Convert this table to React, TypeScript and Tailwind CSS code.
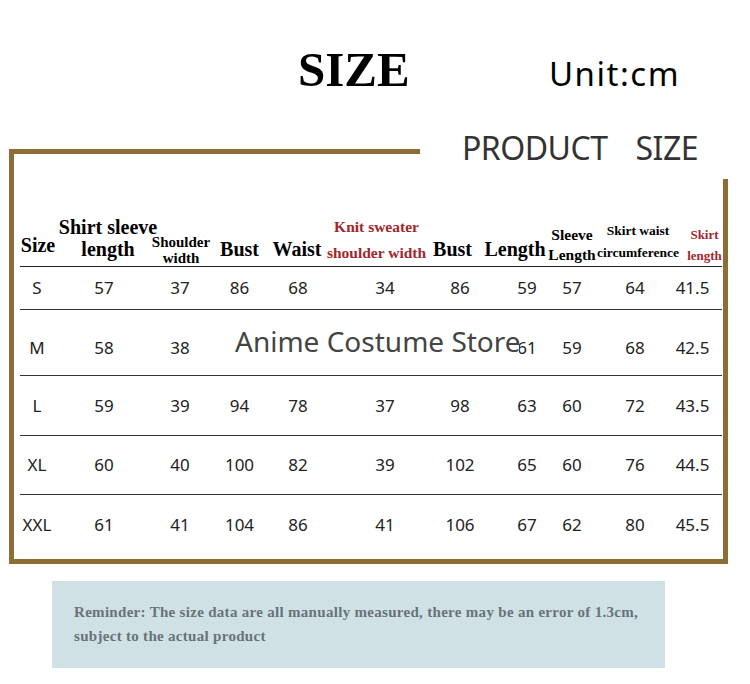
const cols = [
  { w: "w-[50px]", num: "pr-[16px]", head: "pr-[14px] pb-[11px]", lines: ["Size"], cls: "text-[20px] leading-[20px] text-black" },
  { w: "w-[72px]", num: "pr-[4px]", head: "pl-[4px] pb-[6px]", lines: ["Shirt sleeve", "length"], cls: "text-[20px] leading-[22px] text-black" },
  { w: "w-[68px]", num: "pl-[8px]", head: "pl-[10px] pb-0", lines: ["Shoulder", "width"], cls: "text-[15px] leading-[16px] text-black" },
  { w: "w-[59px]", num: "", head: "pb-[7px]", lines: ["Bust"], cls: "text-[20px] leading-[20px] text-black" },
  { w: "w-[72px]", num: "pr-[14px]", head: "pr-[16px] pb-[7px]", lines: ["Waist"], cls: "text-[20px] leading-[20px] text-black" },
  { w: "w-[81px]", num: "pl-[7px]", head: "pr-[10px] pb-0", lines: ["Knit sweater", "shoulder width"], cls: "text-[15.5px] leading-[26px] text-[#a3262b]" },
  { w: "w-[71px]", num: "pl-[5px]", head: "pr-[10px] pb-[7px]", lines: ["Bust"], cls: "text-[20px] leading-[20px] text-black" },
  { w: "w-[56px]", num: "pl-[12px]", head: "pr-[12px] pb-[7px]", lines: ["Length"], cls: "text-[20px] leading-[20px] text-black" },
  { w: "w-[54px]", num: "pr-[8px]", head: "pr-[8px] pb-[1px]", lines: ["Sleeve", "Length"], cls: "text-[15.5px] leading-[20px] text-black" },
  { w: "w-[60px]", num: "pl-[4px]", head: "pl-[10px] pb-[2px]", lines: ["Skirt waist", "circumference"], cls: "text-[13.5px] leading-[22px] text-black" },
  { w: "w-[59px]", num: "", head: "pl-[24px] pb-0", lines: ["Skirt", "length"], cls: "text-[13px] leading-[21px] text-[#a3262b]" },
];

// M row: the middle values sit under the shop watermark in the picture
const rows = [
  { h: "h-[43px] border-b", vals: ["S", "57", "37", "86", "68", "34", "86", "59", "57", "64", "41.5"] },
  { h: "h-[66px] border-b pt-[10px]", vals: ["M", "58", "38", "", "", "", "", "61", "59", "68", "42.5"] },
  { h: "h-[60px] border-b", vals: ["L", "59", "39", "94", "78", "37", "98", "63", "60", "72", "43.5"] },
  { h: "h-[59px] border-b", vals: ["XL", "60", "40", "100", "82", "39", "102", "65", "60", "76", "44.5"] },
  { h: "h-[59px]", vals: ["XXL", "61", "41", "104", "86", "41", "106", "67", "62", "80", "45.5"] },
];

const serif = { fontFamily: '"Liberation Serif", "Times New Roman", serif' };
const sans = { fontFamily: '"Noto Sans", "Noto Sans CJK SC", sans-serif' };

export default function App() {
  return (
    <div className="w-[750px] h-[684px] bg-white overflow-hidden">
      <div className="h-[149px] pt-[45px] pl-[298px] flex items-baseline">
        <div className="w-[251px] text-[49px] leading-none font-bold text-black" style={serif}>
          SIZE
        </div>
        <div className="text-[33px] leading-none tracking-[1.5px] text-black" style={sans}>
          Unit:cm
        </div>
      </div>

      <div className="relative ml-[9px] w-[719px] border-[5px] border-[#8b6d35] pt-[60px] pl-[6px] pr-px pb-[5px]">
        <div className="absolute left-[406px] right-[-10px] top-[-34px] h-[59px] bg-white pl-[42px] pt-[8px]">
          <div className="flex gap-[28px] text-[32px] leading-[40px] tracking-[-0.5px] text-[#333]" style={sans}>
            <span>PRODUCT</span>
            <span>SIZE</span>
          </div>
        </div>

        <div className="relative">
          <div className="flex h-[53px] border-b border-[#222]">
            {cols.map((c, i) => (
              <div
                key={i}
                className={`${c.w} ${c.head} flex shrink-0 flex-col items-center justify-end whitespace-nowrap font-bold ${c.cls}`}
                style={serif}
              >
                {c.lines.map((l) => (
                  <div key={l}>{l}</div>
                ))}
              </div>
            ))}
          </div>

          {rows.map((r) => (
            <div key={r.vals[0]} className={`flex border-[#333] ${r.h}`}>
              {r.vals.map((v, j) => (
                <div
                  key={j}
                  className={`${cols[j].w} ${cols[j].num} flex shrink-0 items-center justify-center text-[17px] text-[#222]`}
                  style={sans}
                >
                  {v}
                </div>
              ))}
            </div>
          ))}

          <div
            className="absolute left-[208px] top-[107px] h-[41px] w-[291px] bg-white pl-[7px] text-[28px] leading-[41px] text-[#444] whitespace-nowrap"
            style={sans}
          >
            Anime Costume Store
          </div>
        </div>
      </div>

      <div className="ml-[52px] mt-[17px] w-[613px] h-[87px] bg-[#cfe1e5] pl-[22px] pt-[19px]">
        <p className="text-[15px] leading-[24px] tracking-[0.3px] font-bold text-[#697376]" style={serif}>
          Reminder: The size data are all manually measured, there may be an error of 1.3cm,
          <br />
          subject to the actual product
        </p>
      </div>
    </div>
  );
}
